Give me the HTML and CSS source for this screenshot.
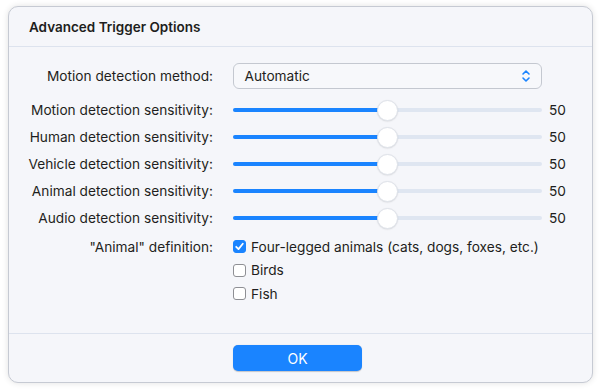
FILE: index.html
```html
<!DOCTYPE html>
<html>
<head>
<meta charset="utf-8">
<link rel="stylesheet" href="styles.css">
</head>
<body>
<div class="dialog">
  <div class="header">Advanced Trigger Options</div>
  <div class="content">
    <div class="label sel-row">Motion detection method:</div>
    <div class="control sel-row">
      <div class="select">
        <span>Automatic</span>
        <svg class="chev" width="10" height="14" viewBox="0 0 10 14"><path d="M2 5 L5 2 L8 5 M2 9 L5 12 L8 9" fill="none" stroke="#1a84ff" stroke-width="1.6" stroke-linecap="round" stroke-linejoin="round"/></svg>
      </div>
    </div>
    <div class="value sel-row"></div>

    <div class="label slide-row first">Motion detection sensitivity:</div>
    <div class="control slide-row first"><div class="slider"><div class="fill" style="width:50%"></div><div class="thumb" style="left:50%"></div></div></div>
    <div class="value slide-row first">50</div>

    <div class="label slide-row">Human detection sensitivity:</div>
    <div class="control slide-row"><div class="slider"><div class="fill" style="width:50%"></div><div class="thumb" style="left:50%"></div></div></div>
    <div class="value slide-row">50</div>

    <div class="label slide-row">Vehicle detection sensitivity:</div>
    <div class="control slide-row"><div class="slider"><div class="fill" style="width:50%"></div><div class="thumb" style="left:50%"></div></div></div>
    <div class="value slide-row">50</div>

    <div class="label slide-row">Animal detection sensitivity:</div>
    <div class="control slide-row"><div class="slider"><div class="fill" style="width:50%"></div><div class="thumb" style="left:50%"></div></div></div>
    <div class="value slide-row">50</div>

    <div class="label slide-row">Audio detection sensitivity:</div>
    <div class="control slide-row"><div class="slider"><div class="fill" style="width:50%"></div><div class="thumb" style="left:50%"></div></div></div>
    <div class="value slide-row">50</div>

    <div class="label check-row first-check">"Animal" definition:</div>
    <div class="control check-list">
      <div class="check-item"><span class="box checked"><svg width="13" height="13" viewBox="0 0 13 13"><path d="M3.2 6.8 L5.5 9.1 L9.8 3.8" fill="none" stroke="#fff" stroke-width="1.8" stroke-linecap="round" stroke-linejoin="round"/></svg></span>Four-legged animals (cats, dogs, foxes, etc.)</div>
      <div class="check-item"><span class="box"></span>Birds</div>
      <div class="check-item"><span class="box"></span>Fish</div>
    </div>
  </div>
  <div class="footer">
    <button class="ok">OK</button>
  </div>
</div>
</body>
</html>
```
FILE: styles.css
```css
html, body {
  margin: 0;
  padding: 0;
  background: #ffffff;
}
body {
  font-family: Inter, "Liberation Sans", Arial, sans-serif;
  font-size: 13.7px;
  color: #1e1e20;
  padding: 6px 8px 7px 7.5px;
  width: 600px;
  height: 390px;
  box-sizing: border-box;
}
.dialog {
  width: 585px;
  height: 377px;
  box-sizing: border-box;
  background: #f5f6fa;
  border: 1px solid #c6cad3;
  border-radius: 10px;
  box-shadow: 0 0 6px rgba(0,0,0,0.12);
  display: flex;
  flex-direction: column;
  overflow: hidden;
}
.header {
  height: 40px;
  flex: none;
  box-sizing: border-box;
  padding-left: 20.5px;
  display: flex;
  align-items: center;
  font-weight: 600;
  font-size: 13.5px;
  border-bottom: 1px solid #dde3ee;
}
.content {
  flex: 1;
  display: grid;
  grid-template-columns: 224.5px 309px 50px;
  column-gap: 0;
  padding-top: 16px;
  align-content: start;
}
.label {
  text-align: right;
  padding-right: 20px;
  display: flex;
  align-items: center;
  justify-content: flex-end;
  white-space: nowrap;
}
.sel-row { height: 26px; }
.slide-row { height: 27px; }
.slide-row.first { margin-top: 7.5px; }
.first-check { margin-top: 3.5px; height: 23.5px; }
.label.check-row { align-self: start; }
.control { display: flex; align-items: center; }
.value {
  display: flex;
  align-items: center;
  padding-left: 7px;
}
.select {
  width: 100%;
  height: 26px;
  box-sizing: border-box;
  border: 1px solid #c4c8d0;
  border-radius: 6px;
  background: #f7f8fb;
  display: flex;
  align-items: center;
  justify-content: space-between;
  padding: 0 10px 0 10.5px;
  font-size: 13.7px;
}
.chev { display: block; }
.slider {
  position: relative;
  width: 100%;
  height: 4px;
  border-radius: 2px;
  background: #dfe6f1;
}
.fill {
  height: 4px;
  border-radius: 2px;
  background: #1a84ff;
}
.thumb {
  position: absolute;
  top: 50%;
  width: 21px;
  height: 21px;
  margin-left: -10.5px;
  margin-top: -10.5px;
  box-sizing: border-box;
  border-radius: 50%;
  background: #ffffff;
  border: 1px solid #dfe3ea;
  box-shadow: 0 0.5px 1.5px rgba(0,0,0,0.12);
}
.check-list {
  grid-column: 2 / 4;
  flex-direction: column;
  align-items: flex-start;
  margin-top: 3.5px;
}
.check-item {
  height: 23.5px;
  display: flex;
  align-items: center;
  white-space: nowrap;
}
.box {
  width: 13px;
  height: 13px;
  box-sizing: border-box;
  border: 1px solid #8e8f94;
  border-radius: 3px;
  background: #ffffff;
  margin-right: 5px;
  display: inline-flex;
}
.box.checked {
  background: #1a84ff;
  border-color: #1a84ff;
}
.box svg { display: block; margin: -1px; }
.footer {
  height: 49px;
  flex: none;
  box-sizing: border-box;
  border-top: 1px solid #dde3ee;
  padding-left: 224.5px;
  display: flex;
  align-items: center;
}
.ok {
  width: 129px;
  height: 26px;
  border: none;
  border-radius: 5px;
  background: #1a84ff;
  color: #ffffff;
  font-family: Inter, "Liberation Sans", Arial, sans-serif;
  font-size: 14px;
  box-shadow: 0 0.5px 1px rgba(0,0,0,0.2);
  padding: 0;
}
```
